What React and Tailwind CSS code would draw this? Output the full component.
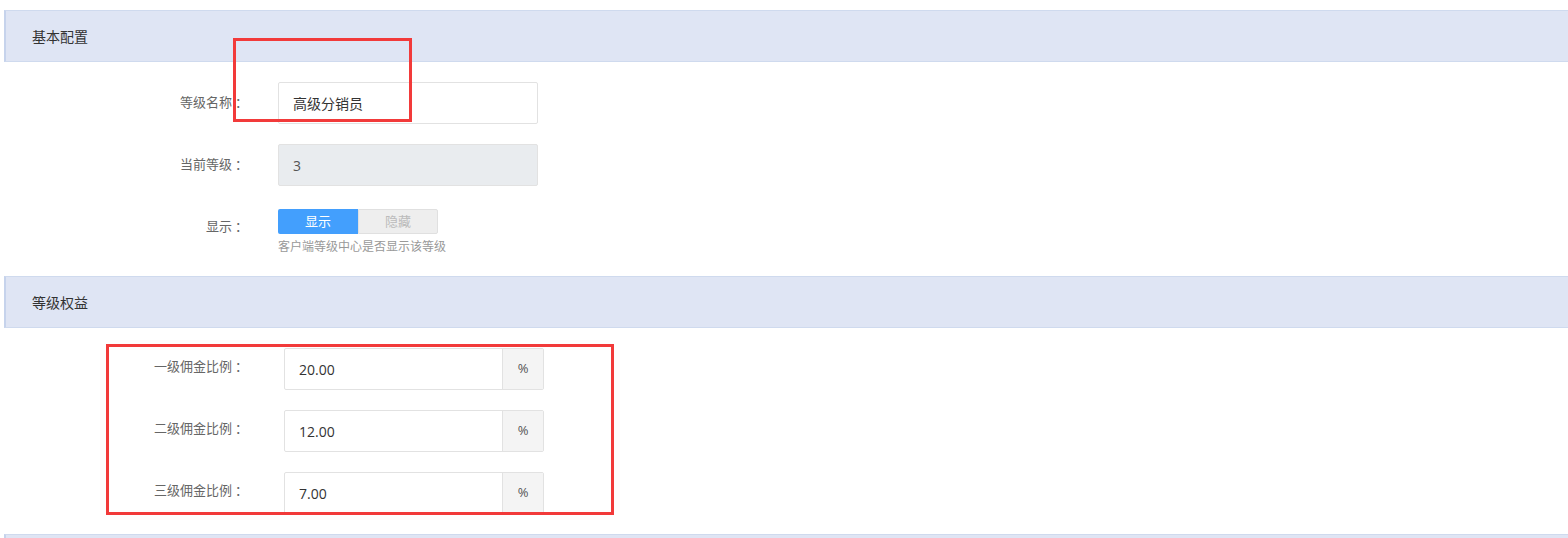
const font = "font-['Open_Sans','Noto_Sans_CJK_SC',sans-serif]"

const rates = [
  { label: '一级佣金比例', value: '20.00' },
  { label: '二级佣金比例', value: '12.00' },
  { label: '三级佣金比例', value: '7.00' },
]

function SectionHeader({ title, className = '' }) {
  return (
    <div
      className={`ml-[4px] h-[52px] flex items-center pl-[26px] bg-[#dfe5f4] border-y border-[#cfdaee] border-l-2 border-l-[#c6d3ec] text-[14px] text-[#333] ${className}`}
    >
      {title}
    </div>
  )
}

function Label({ text, className = '' }) {
  return (
    <label className={`w-[250px] text-right text-[13px] text-[#666] ${className}`}>
      {text}
      <span className="ml-[3px] mr-[2px]">：</span>
    </label>
  )
}

export default function App() {
  return (
    <div className={`relative w-full h-[538px] overflow-hidden bg-white pt-[10px] ${font}`}>
      {/* 基本配置 */}
      <SectionHeader title="基本配置" />

      <div className="mt-[20px] flex items-center">
        <Label text="等级名称" className="mb-[1px]" />
        <div className="ml-[28px] w-[260px] h-[42px] border border-[#e2e2e2] rounded-[2px] flex items-center px-[14px] text-[14px] text-[#333]">
          高级分销员
        </div>
      </div>

      <div className="mt-[20px] flex items-center">
        <Label text="当前等级" className="mb-[1px]" />
        <div className="ml-[28px] w-[260px] h-[42px] border border-[#e2e2e2] rounded-[2px] bg-[#e9ecef] flex items-center px-[14px] text-[14px] text-[#555]">
          3
        </div>
      </div>

      <div className="mt-[23px] flex items-start">
        <Label text="显示" className="leading-[25px] mt-[5px]" />
        <div className="ml-[28px]">
          <div className="flex h-[25px] w-[160px]">
            <div className="w-[80px] flex items-center justify-center bg-[#439ffd] text-white text-[13px] rounded-l-[2px]">显示</div>
            <div className="w-[80px] flex items-center justify-center bg-[#eeeeee] border border-[#e0e0e0] text-[#bbb] text-[13px] rounded-r-[2px]">隐藏</div>
          </div>
          <p className="mt-[6px] text-[12px] leading-[14px] text-[#999]">客户端等级中心是否显示该等级</p>
        </div>
      </div>

      {/* 等级权益 */}
      <SectionHeader title="等级权益" className="mt-[22px]" />

      <div className="mt-[20px] flex flex-col gap-[20px]">
        {rates.map((r) => (
          <div key={r.label} className="flex items-center">
            <Label text={r.label} className="mb-[4px]" />
            <div className="ml-[34px] flex h-[42px] w-[260px] border border-[#e2e2e2] rounded-[2px]">
              <div className="flex-1 flex items-center px-[14px] text-[14px] text-[#333]">{r.value}</div>
              <div className="w-[41px] flex items-center justify-center bg-[#f4f4f4] border-l border-[#e2e2e2] text-[13px] text-[#555]">%</div>
            </div>
          </div>
        ))}
      </div>

      <SectionHeader title="" className="mt-[20px]" />

      {/* annotation boxes */}
      <div className="absolute left-[233px] top-[38px] w-[179px] h-[84px] border-[3px] border-[#f23a3a] pointer-events-none" />
      <div className="absolute left-[106px] top-[344px] w-[508px] h-[171px] border-[3px] border-[#f23a3a] pointer-events-none" />
    </div>
  )
}
